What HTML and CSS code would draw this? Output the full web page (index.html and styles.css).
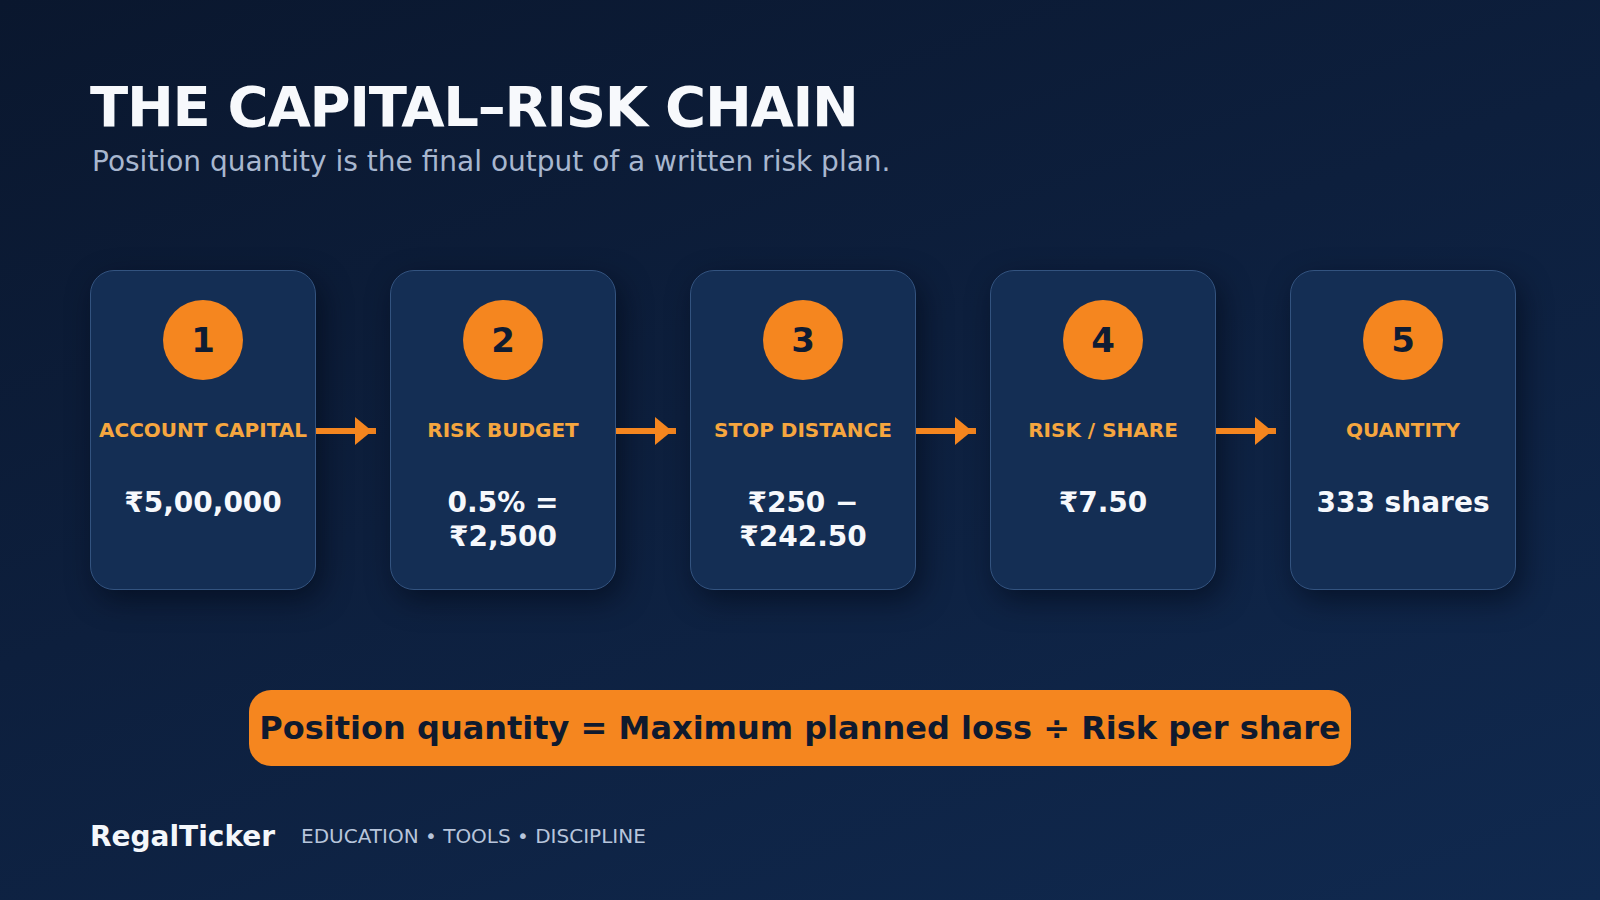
FILE: index.html
```html
<!DOCTYPE html>
<html lang="en">
<head>
<meta charset="utf-8">
<title>The Capital–Risk Chain</title>
<link rel="stylesheet" href="styles.css">
</head>
<body>
<main class="slide">
  <header class="head">
    <h1 class="title">THE CAPITAL–RISK CHAIN</h1>
    <p class="subtitle">Position quantity is the final output of a written risk plan.</p>
  </header>

  <section class="chain">
    <div class="card">
      <div class="num">1</div>
      <div class="label">ACCOUNT CAPITAL</div>
      <div class="value">₹5,00,000</div>
    </div>
    <div class="arrow"><svg width="60" height="30" viewBox="0 0 60 30"><rect x="0" y="12" width="60" height="6" fill="#f5861f"/><polygon points="39,1 56,15 39,29" fill="#f5861f"/></svg></div>
    <div class="card">
      <div class="num">2</div>
      <div class="label">RISK BUDGET</div>
      <div class="value">0.5% = ₹2,500</div>
    </div>
    <div class="arrow"><svg width="60" height="30" viewBox="0 0 60 30"><rect x="0" y="12" width="60" height="6" fill="#f5861f"/><polygon points="39,1 56,15 39,29" fill="#f5861f"/></svg></div>
    <div class="card">
      <div class="num">3</div>
      <div class="label">STOP DISTANCE</div>
      <div class="value">₹250 − ₹242.50</div>
    </div>
    <div class="arrow"><svg width="60" height="30" viewBox="0 0 60 30"><rect x="0" y="12" width="60" height="6" fill="#f5861f"/><polygon points="39,1 56,15 39,29" fill="#f5861f"/></svg></div>
    <div class="card">
      <div class="num">4</div>
      <div class="label">RISK / SHARE</div>
      <div class="value">₹7.50</div>
    </div>
    <div class="arrow"><svg width="60" height="30" viewBox="0 0 60 30"><rect x="0" y="12" width="60" height="6" fill="#f5861f"/><polygon points="39,1 56,15 39,29" fill="#f5861f"/></svg></div>
    <div class="card">
      <div class="num">5</div>
      <div class="label">QUANTITY</div>
      <div class="value">333 shares</div>
    </div>
  </section>

  <div class="formula-wrap">
    <div class="formula">Position quantity = Maximum planned loss ÷ Risk per share</div>
  </div>

  <footer class="foot">
    <span class="brand">RegalTicker</span>
    <span class="tagline">EDUCATION • TOOLS • DISCIPLINE</span>
  </footer>
</main>
</body>
</html>
```

FILE: styles.css
```css
* { box-sizing: border-box; }

html, body {
  margin: 0;
  padding: 0;
  width: 1600px;
  height: 900px;
  overflow: hidden;
}

body {
  font-family: "DejaVu Sans", "Liberation Sans", sans-serif;
  background: linear-gradient(160deg, #0a172e 0%, #0d1f3d 45%, #10294f 100%);
  color: #f4f7fb;
}

.slide {
  width: 1600px;
  height: 900px;
  padding: 75px 90px 0 90px;
  display: flex;
  flex-direction: column;
}

.title {
  margin: 0;
  font-size: 56px;
  line-height: 64px;
  font-weight: 700;
  letter-spacing: -1.3px;
  color: #f7f9fc;
}

.subtitle {
  margin: 7px 0 0 2px;
  font-size: 28px;
  line-height: 32px;
  color: #a8b7cf;
}

.chain {
  margin-top: 92px;
  display: flex;
  align-items: flex-start;
}

.card {
  width: 226px;
  height: 320px;
  flex: none;
  background: #142e54;
  border: 1.5px solid #33537f;
  border-radius: 24px;
  box-shadow: 6px 10px 28px rgba(2, 8, 20, 0.55);
  display: flex;
  flex-direction: column;
  align-items: center;
  padding: 29px 6px 0;
  text-align: center;
}

.num {
  width: 80px;
  height: 80px;
  border-radius: 50%;
  background: #f5861f;
  color: #0f1c33;
  font-size: 34px;
  font-weight: 700;
  display: flex;
  align-items: center;
  justify-content: center;
}

.label {
  margin-top: 38px;
  font-size: 20px;
  line-height: 24px;
  font-weight: 700;
  color: #f6a63f;
  white-space: nowrap;
}

.value {
  margin-top: 44px;
  font-size: 28px;
  line-height: 34px;
  font-weight: 700;
  color: #f6f8fc;
  padding: 0 10px;
}

.arrow {
  width: 74px;
  flex: none;
  margin-top: 146px;
  display: flex;
}

.arrow svg { display: block; }

.formula-wrap {
  margin-top: 100px;
  display: flex;
  justify-content: center;
  margin-left: -90px;
  margin-right: -90px;
}

.formula {
  background: #f5861f;
  color: #0f1a2e;
  border-radius: 22px;
  height: 76px;
  padding: 0 10px;
  display: flex;
  align-items: center;
  font-size: 32px;
  font-weight: 700;
  white-space: nowrap;
}

.foot {
  margin-top: 55px;
  display: flex;
  align-items: flex-start;
  gap: 26px;
}

.brand {
  font-size: 28px;
  line-height: 32px;
  font-weight: 700;
  color: #f4f7fb;
}

.tagline {
  margin-top: 3px;
  font-size: 20px;
  line-height: 24px;
  color: #b7c5db;
}
```
